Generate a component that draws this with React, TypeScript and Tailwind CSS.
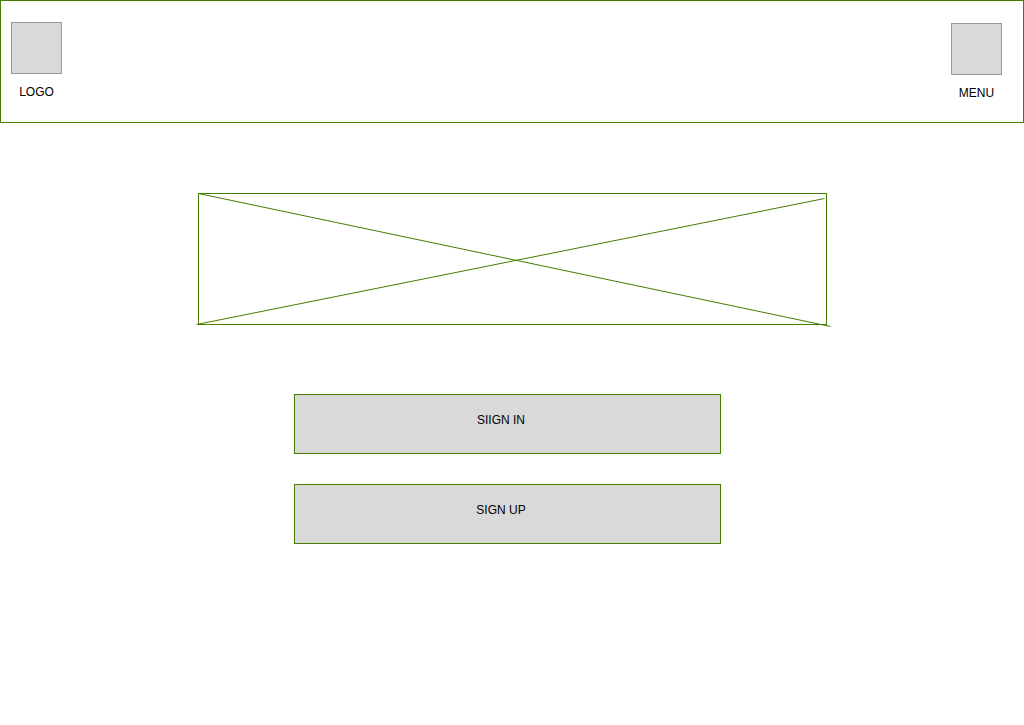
import React from "react";

export default function App() {
  const green = "border-[#467c00]";
  return (
    <div className="w-[1024px] h-[725px] bg-white relative" style={{ fontFamily: '"Liberation Sans", Arial, sans-serif' }}>
      <header className={`h-[123px] border ${green} flex justify-between`}>
        <div className="ml-[10px] mt-[21px] w-[51px] flex flex-col items-center">
          <div className="w-[51px] h-[52px] bg-[#d9d9d9] border border-[#999999]" />
          <span className="mt-[11px] text-[12px] leading-[14px] text-black">LOGO</span>
        </div>
        <div className="mr-[21px] mt-[22px] w-[51px] flex flex-col items-center">
          <div className="w-[51px] h-[52px] bg-[#d9d9d9] border border-[#999999]" />
          <span className="mt-[11px] text-[12px] leading-[14px] text-black">MENU</span>
        </div>
      </header>

      <div className={`ml-[198px] mt-[70px] w-[629px] h-[132px] border ${green} relative`}>
        <svg className="absolute left-[-1px] top-[-1px] overflow-visible" width="629" height="132">
          <line x1="0.5" y1="0.5" x2="632.5" y2="133.5" stroke="#467c00" strokeWidth="1" />
          <line x1="-1.5" y1="131.5" x2="626.5" y2="5.5" stroke="#467c00" strokeWidth="1" />
        </svg>
      </div>

      <div className="ml-[294px] mt-[69px] flex flex-col gap-[30px]">
        <div className={`w-[427px] h-[60px] bg-[#d9d9d9] border ${green} flex justify-center pt-[18px] pr-[13px]`}>
          <span className="text-[12px] leading-[14px] text-black">SIIGN IN</span>
        </div>
        <div className={`w-[427px] h-[60px] bg-[#d9d9d9] border ${green} flex justify-center pt-[18px] pr-[13px]`}>
          <span className="text-[12px] leading-[14px] text-black">SIGN UP</span>
        </div>
      </div>
    </div>
  );
}
